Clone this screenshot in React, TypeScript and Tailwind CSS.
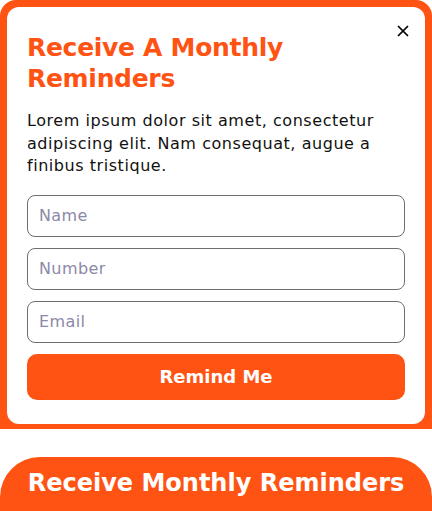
import { X } from "lucide-react"

export default function App() {
  const font = { fontFamily: '"DejaVu Sans", "Noto Sans", sans-serif' }
  return (
    <div className="w-[432px] h-[511px] bg-white overflow-hidden" style={font}>
      {/* Popup */}
      <div className="bg-[#ff5314] rounded-t-[16px] pt-[7px] px-[7px] pb-[5px]">
        <div className="relative bg-white rounded-[12px] px-[20px] pt-[25px] pb-[24px]">
          <button className="absolute right-[13px] top-[15px] text-black">
            <X size={18} strokeWidth={2.3} />
          </button>
          <h2 className="text-[#ff5314] font-bold text-[25px] leading-[31px] tracking-[-0.3px]">
            Receive A Monthly
            <br />
            Reminders
          </h2>
          <p className="mt-[16px] text-[16px] leading-[22.5px] tracking-[0.55px] text-[#111]">
            Lorem ipsum dolor sit amet, consectetur adipiscing elit. Nam consequat, augue a finibus tristique.
          </p>
          <form className="mt-[17px] flex flex-col gap-[11px]" onSubmit={(e) => e.preventDefault()}>
            {["Name", "Number", "Email"].map((p) => (
              <input
                key={p}
                placeholder={p}
                className="h-[42px] w-full rounded-[8px] border border-[#6e6e6e] px-[11px] text-[16px] tracking-[0.4px] placeholder:text-[#8c89a8] outline-none"
                style={font}
              />
            ))}
            <button
              type="submit"
              className="h-[46px] w-full rounded-[10px] bg-[#ff5314] text-white font-bold text-[18px]"
              style={font}
            >
              Remind Me
            </button>
          </form>
        </div>
      </div>

      {/* Tab */}
      <div className="mt-[28px] h-[60px] bg-[#ff5314] rounded-t-[40px] flex justify-center pt-[11px]">
        <span className="text-white font-bold text-[24px] leading-[30px]">Receive Monthly Reminders</span>
      </div>
    </div>
  )
}
